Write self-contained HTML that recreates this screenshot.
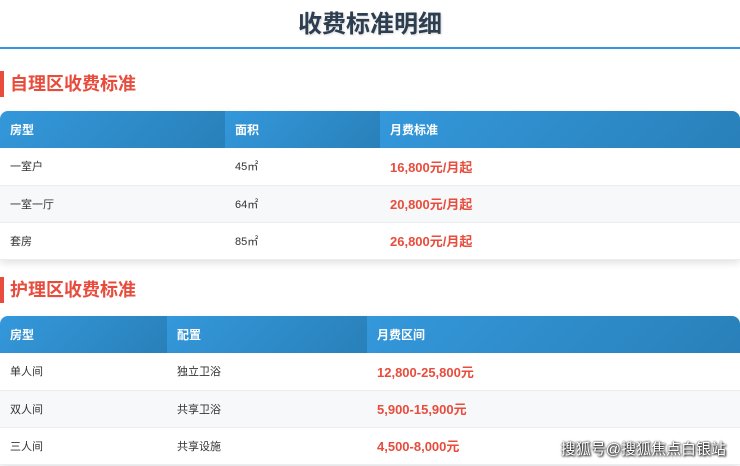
<!DOCTYPE html>
<html><head><meta charset="utf-8"><style>
*{margin:0;padding:0;box-sizing:border-box}
body{width:740px;height:466px;overflow:hidden;background:#fff;font-family:"Liberation Sans","Noto Sans CJK SC",sans-serif;position:relative}
h1{position:absolute;top:4px;left:0;width:740px;text-align:center;font-size:24px;color:#2c3e50;font-weight:bold;text-shadow:1px 1px 2px rgba(0,0,0,.15)}
.line{position:absolute;top:47px;left:0;width:740px;height:2px;background:#3498db}
.sec{position:absolute;left:0;height:26px;border-left:4px solid #e74c3c;padding-left:6px;font-size:18px;font-weight:bold;color:#e74c3c;line-height:26px}
table{position:absolute;left:0;width:740px;border-collapse:collapse;box-shadow:0 3px 8px rgba(0,0,0,.12);border-radius:8px 8px 0 0;overflow:hidden}
th{height:37px;color:#fff;font-size:12px;text-align:left;padding-left:10px;background:linear-gradient(135deg,#3498db,#2980b9)}
td{height:37px;font-size:11px;color:#333;padding-left:10px;border-bottom:1px solid #ebedf0}
tr.alt td{background:#f7f8fa}
td.p{color:#e74c3c;font-weight:bold;font-size:13px}
.wm{position:absolute;right:14px;top:438px;color:#fff;font-size:15px;text-shadow:0 0 2px #000,1px 1px 2px #000}
</style></head><body>
<h1>收费标准明细</h1>
<div class="line"></div>
<div class="sec" style="top:71px">自理区收费标准</div>
<table style="top:111px">
<tr><th style="width:225px">房型</th><th style="width:155px">面积</th><th>月费标准</th></tr>
<tr><td>一室户</td><td>45㎡</td><td class="p">16,800元/月起</td></tr>
<tr class="alt"><td>一室一厅</td><td>64㎡</td><td class="p">20,800元/月起</td></tr>
<tr><td>套房</td><td>85㎡</td><td class="p">26,800元/月起</td></tr>
</table>
<div class="sec" style="top:277px">护理区收费标准</div>
<table style="top:316px">
<tr><th style="width:167px">房型</th><th style="width:200px">配置</th><th>月费区间</th></tr>
<tr><td>单人间</td><td>独立卫浴</td><td class="p">12,800-25,800元</td></tr>
<tr class="alt"><td>双人间</td><td>共享卫浴</td><td class="p">5,900-15,900元</td></tr>
<tr><td>三人间</td><td>共享设施</td><td class="p">4,500-8,000元</td></tr>
</table>
<div class="wm">搜狐号@搜狐焦点白银站</div>
</body></html>
